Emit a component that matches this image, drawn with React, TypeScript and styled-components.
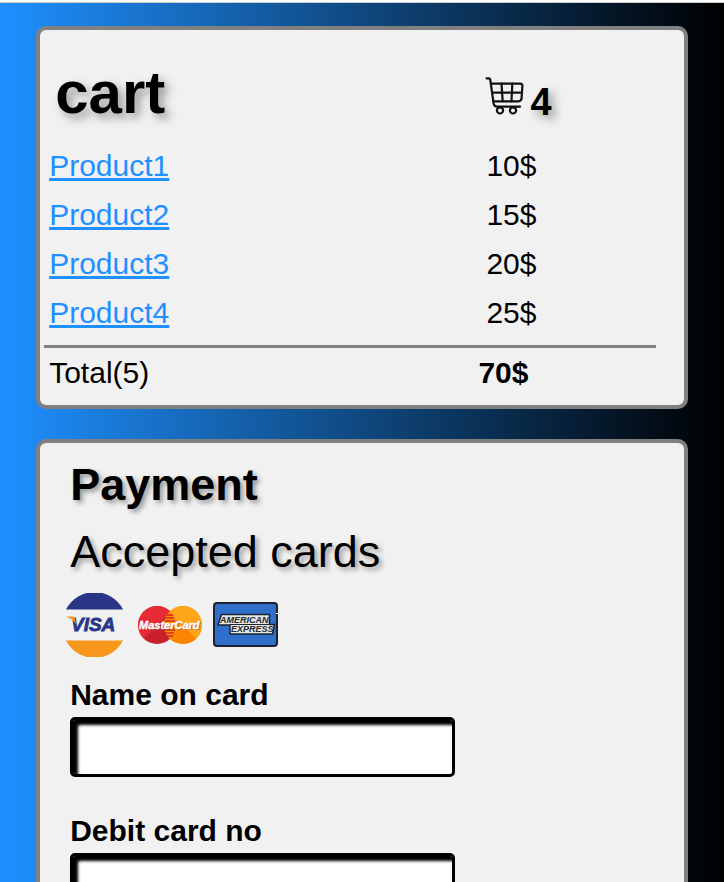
import React from "react";
import styled, { createGlobalStyle, css } from "styled-components";

const GlobalStyle = createGlobalStyle`
  *, *::before, *::after { box-sizing: border-box; }
  body {
    margin: 0;
    color: #000;
    font-family: "Liberation Sans", Arial, Helvetica, sans-serif;
    font-size: 30px;
    line-height: 34px;
  }
`;

const Shell = styled.div`
  display: flex;
  flex-direction: column;
  height: 100vh;
`;

const TopEdge = styled.div`
  flex: none;
  height: 3px;
  background: #fff;
  border-bottom: 1px solid #ccc;
`;

const Page = styled.main`
  flex: 1;
  min-height: 0;
  display: flex;
  flex-direction: column;
  gap: 30px;
  padding: 23px 5%;
  overflow-y: auto;
  scrollbar-width: none;
  background: linear-gradient(to right, dodgerblue, black);
`;

const panel = css`
  flex: none;
  background: #f1f1f1;
  border: 4px solid gray;
  border-radius: 10px;
`;

const CartPanel = styled.section`
  ${panel}
  padding: 28px 28px 8px 4px;
`;

const PaymentPanel = styled.section`
  ${panel}
  display: flex;
  flex-direction: column;
  align-items: flex-start;
  padding: 16px 30px 30px;
`;

const CartTable = styled.table`
  width: 100%;
  table-layout: fixed;
  border-spacing: 0;
`;

const HeadCell = styled.th<{ $price?: boolean }>`
  width: ${(p) => (p.$price ? "29%" : "71%")};
  padding: 0 0 15px ${(p) => (p.$price ? 7 : 11)}px;
  text-align: left;
  vertical-align: top;
`;

const CartTitle = styled.h1`
  margin: 0;
  font-size: 60px;
  line-height: 69px;
  text-shadow: 5px 5px 10px #999;
`;

const Count = styled.div`
  display: flex;
  align-items: flex-end;
  gap: 6px;
  padding-top: 19px;
  font-size: 38px;
  line-height: 44px;
  text-shadow: 5px 5px 10px #999;

  svg { margin-bottom: 9px; }
`;

const Cell = styled.td<{ $price?: boolean }>`
  padding: 7px 0 8px ${(p) => (p.$price ? 8 : 5)}px;
`;

const TotalCell = styled(Cell)<{ $amount?: boolean }>`
  border-top: 3px solid gray;
  padding: 8px 0 7px ${(p) => (p.$amount ? 0 : 5)}px;
  font-weight: ${(p) => (p.$amount ? 700 : 400)};
`;

const SpacerCell = styled.td`
  height: 7px;
  padding: 0;
`;

const ProductLink = styled.a`
  color: dodgerblue;
  text-decoration: underline;
  text-decoration-thickness: 3px;
  text-underline-offset: 2px;
  text-decoration-skip-ink: none;
`;

const Heading = styled.h2<{ $light?: boolean }>`
  margin: 0 0 15px;
  font-size: 45px;
  line-height: 52px;
  font-weight: ${(p) => (p.$light ? 400 : 700)};
  text-shadow: 3px 3px 5px #999;
`;

const CardLogos = styled.div`
  display: flex;
  gap: 11px;
  margin: 0 0 21px -7px;
`;

const Field = styled.div`
  display: flex;
  flex-direction: column;
  gap: 5px;
  width: 66%;
  margin-bottom: 37px;
`;

const Label = styled.label`
  font-weight: 700;
`;

const TextInput = styled.input`
  width: 100%;
  height: 60px;
  padding: 8px 12px;
  border: 3px solid #000;
  border-radius: 5px;
  background: #fff;
  box-shadow: inset 5px 5px 3px #000;
  font: inherit;
`;

function CartIcon() {
  return (
    <svg width="39" height="38" viewBox="0 0 39 38" fill="none" stroke="#111" strokeWidth="2.200" strokeLinecap="round" strokeLinejoin="round" aria-hidden="true">
      <path d="M1.500 1.300h2.200q1.300 0 1.600 1.500L8.600 26.500q.6 3.200 3.600 3.200H35" />
      <path d="M6 6.600h29.300q2.200 0 2.100 2.400L36.600 21q-.3 3.300-3.400 3.300H8.400" />
      <path d="M7.200 15.700H37M16.500 6.600l1.200 17.700M27.300 6.600l-.8 17.700" />
      <circle cx="15" cy="33.400" r="3.100" />
      <circle cx="28" cy="33.400" r="3.100" />
    </svg>
  );
}

function VisaLogo() {
  return (
    <svg width="64" height="64" viewBox="0 0 64 64" role="img" aria-label="Visa">
      <path d="M3 16.500a32 32 0 0 1 57 0z" fill="#293688" />
      <path d="M3 47.500a32 32 0 0 0 57 0z" fill="#f7981d" />
      <text x="8" y="38" fontSize="19" fontWeight="700" fontStyle="italic" fill="#293688" stroke="#293688" strokeWidth=".8">VISA</text>
      <path d="M3 23.500h6.500q2 0 2.400 2l1.200 6Q10 26 3 23.500z" fill="#f7981d" />
    </svg>
  );
}

function MasterCardLogo() {
  return (
    <svg width="64" height="64" viewBox="0 0 64 64" role="img" aria-label="MasterCard">
      <circle cx="45" cy="32" r="19" fill="#ff9800" />
      <path d="M58.400 45.400a19 19 0 0 1-26.800 0L45 32z" fill="#fb8500" />
      <path d="M45 13a19 19 0 0 1 13.400 32.400L31.600 18.600A19 19 0 0 1 45 13z" fill="#ffa51c" />
      <circle cx="19" cy="32" r="19" fill="#c9202e" />
      <path d="M19 13A19 19 0 0 0 5.600 45.400L32.400 18.600A19 19 0 0 0 19 13z" fill="#e62a36" />
      <path d="M32 18a19 19 0 0 1 0 28 19 19 0 0 1 0-28z" fill="#ff9800" />
      <path d="M29 22h6M27 25h9M27 28h10M27 37h10M27 40h9M29 43h6" stroke="#d61f2c" strokeWidth="1.500" />
      <text x="2" y="37" fontSize="11" fontWeight="700" fontStyle="italic" fill="#a83a30" opacity=".6">MasterCard</text>
      <text x="1" y="36" fontSize="11" fontWeight="700" fontStyle="italic" fill="#fff" stroke="#fff" strokeWidth=".4">MasterCard</text>
    </svg>
  );
}

function AmexLogo() {
  return (
    <svg width="66" height="64" viewBox="0 0 66 64" role="img" aria-label="American Express">
      <rect x="1" y="10" width="63" height="43" rx="3" fill="#2f6fca" stroke="#1b2330" strokeWidth="2" />
      <path d="M8.500 21.500h48v10h5l-2 9.500H17v-9H5z" fill="#e4e6e8" stroke="#1b2330" strokeWidth="1.500" strokeLinejoin="round" />
      <path d="M17 31.500h40" stroke="#1b2330" strokeWidth="1" />
      <text x="7" y="30" fontSize="9" fontWeight="700" fontStyle="italic" fill="#25292d">AMERICAN</text>
      <text x="18" y="39" fontSize="9" fontWeight="700" fontStyle="italic" fill="#25292d">EXPRESS</text>
      <path d="M63 20.500h3" stroke="#f1f1f1" strokeWidth="1" />
    </svg>
  );
}

const products = [
  { name: "Product1", price: "10$" },
  { name: "Product2", price: "15$" },
  { name: "Product3", price: "20$" },
  { name: "Product4", price: "25$" },
];

const fields = [
  { id: "card-name", label: "Name on card" },
  { id: "card-number", label: "Debit card no" },
];

export default function App() {
  return (
    <Shell>
      <GlobalStyle />
      <TopEdge />
      <Page>
        <CartPanel>
          <CartTable>
            <thead>
              <tr>
                <HeadCell scope="col">
                  <CartTitle>cart</CartTitle>
                </HeadCell>
                <HeadCell scope="col" $price>
                  <Count>
                    <CartIcon />
                    <span>4</span>
                  </Count>
                </HeadCell>
              </tr>
            </thead>
            <tbody>
              {products.map((p) => (
                <tr key={p.name}>
                  <Cell>
                    <ProductLink href="#">{p.name}</ProductLink>
                  </Cell>
                  <Cell $price>{p.price}</Cell>
                </tr>
              ))}
              <tr>
                <SpacerCell colSpan={2} />
              </tr>
            </tbody>
            <tfoot>
              <tr>
                <TotalCell>Total(5)</TotalCell>
                <TotalCell $amount>70$</TotalCell>
              </tr>
            </tfoot>
          </CartTable>
        </CartPanel>
        <PaymentPanel>
          <Heading>Payment</Heading>
          <Heading $light>Accepted cards</Heading>
          <CardLogos>
            <VisaLogo />
            <MasterCardLogo />
            <AmexLogo />
          </CardLogos>
          {fields.map((f) => (
            <Field key={f.id}>
              <Label htmlFor={f.id}>{f.label}</Label>
              <TextInput id={f.id} type="text" />
            </Field>
          ))}
        </PaymentPanel>
      </Page>
    </Shell>
  );
}
